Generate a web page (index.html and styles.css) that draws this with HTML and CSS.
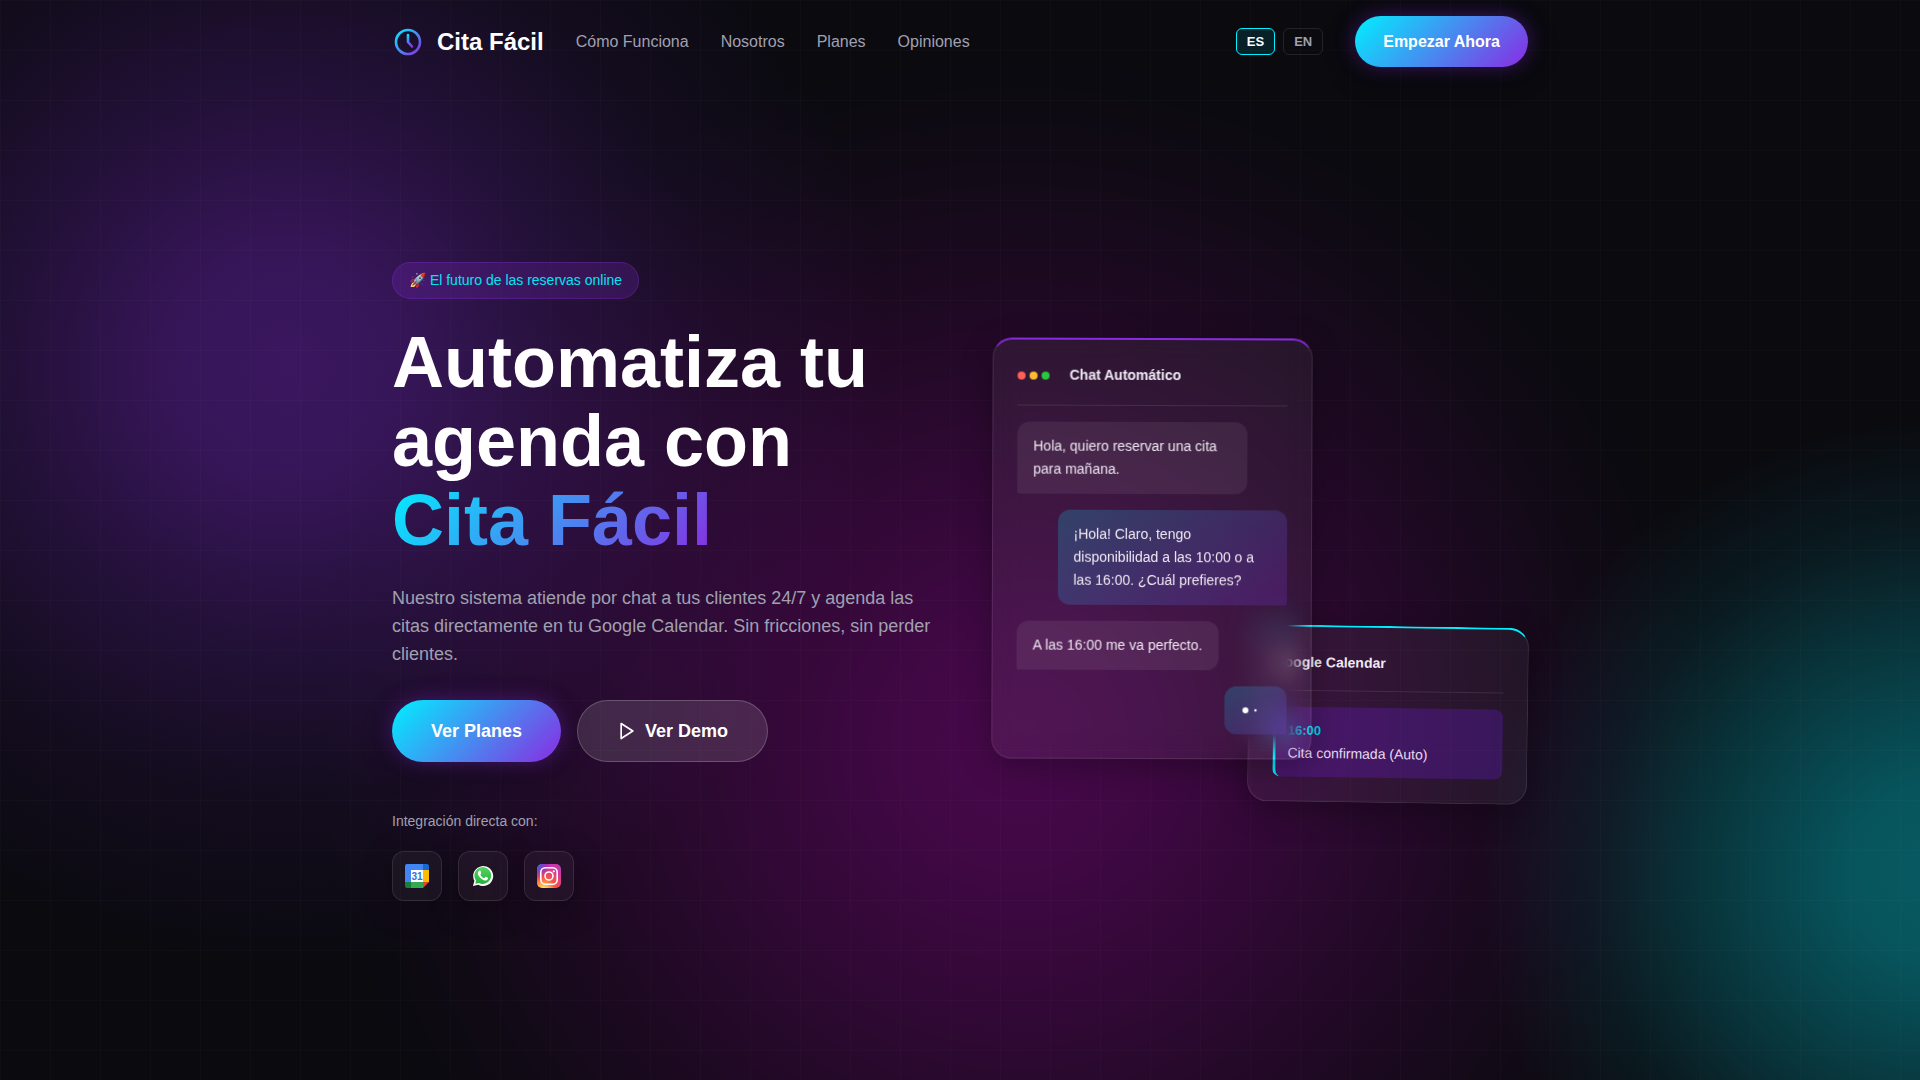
FILE: index.html
```html
<!DOCTYPE html>
<html lang="es">
<head>
<meta charset="utf-8">
<meta name="viewport" content="width=device-width, initial-scale=1">
<title>Cita Fácil</title>
<link rel="stylesheet" href="styles.css">
</head>
<body>
<header class="header">
  <div class="container header-inner">
    <a class="logo" href="#">
      <svg class="logo-icon" viewBox="0 0 32 32" fill="none" stroke-width="2.600" stroke-linecap="round" stroke-linejoin="round" aria-hidden="true">
        <defs>
          <linearGradient id="brand" x1="4" y1="4" x2="28" y2="28" gradientUnits="userSpaceOnUse">
            <stop offset="0" stop-color="#00f0ff"/>
            <stop offset="1" stop-color="#8a2be2"/>
          </linearGradient>
          <linearGradient id="hands" x1="14" y1="8" x2="20" y2="21" gradientUnits="userSpaceOnUse">
            <stop offset="0" stop-color="#00f0ff"/>
            <stop offset="1" stop-color="#8a2be2"/>
          </linearGradient>
        </defs>
        <circle cx="16" cy="16" r="12" stroke="url(#brand)"/>
        <path d="M16 9v7l4 4.500" stroke="url(#hands)"/>
      </svg>
      <span>Cita Fácil</span>
    </a>
    <nav class="nav">
      <a href="#como">Cómo Funciona</a>
      <a href="#nosotros">Nosotros</a>
      <a href="#planes">Planes</a>
      <a href="#opiniones">Opiniones</a>
    </nav>
    <div class="lang">
      <button class="lang-button lang-active" type="button">ES</button>
      <button class="lang-button" type="button">EN</button>
    </div>
    <a class="button button-primary" href="#planes">Empezar Ahora</a>
  </div>
</header>

<main class="hero">
  <div class="container hero-grid">
    <section class="hero-copy">
      <p class="badge">🚀 El futuro de las reservas online</p>
      <h1 class="title">Automatiza tu agenda con <span class="title-brand">Cita Fácil</span></h1>
      <p class="lead">Nuestro sistema atiende por chat a tus clientes 24/7 y agenda las citas directamente en tu Google Calendar. Sin fricciones, sin perder clientes.</p>
      <div class="actions">
        <a class="button button-large button-primary" href="#planes">Ver Planes</a>
        <a class="button button-large button-glass" href="#demo">
          <svg class="play" viewBox="0 0 24 24" fill="none" stroke="#fff" stroke-width="2" stroke-linecap="round" stroke-linejoin="round" aria-hidden="true"><path d="M5 3l14 9-14 9z"/></svg>
          Ver Demo
        </a>
      </div>
      <p class="integrations-label">Integración directa con:</p>
      <ul class="integrations">
        <li class="integration">
          <svg viewBox="0 0 24 24" role="img" aria-label="Google Calendar">
            <path fill="#4285f4" d="M2 0h16v6H6v12H0V2a2 2 0 0 1 2-2z"/>
            <path fill="#1967d2" d="M18 0h4a2 2 0 0 1 2 2v4h-6z"/>
            <path fill="#fbbc04" d="M18 6h6v12h-6z"/>
            <path fill="#34a853" d="M6 18h12v6H6z"/>
            <path fill="#188038" d="M0 18h6v6H2a2 2 0 0 1-2-2z"/>
            <path fill="#ea4335" d="M18 18h6l-6 6z"/>
            <path fill="#fff" d="M6 6h12v12H6z"/>
            <text x="12" y="16" text-anchor="middle" class="calendar-day">31</text>
          </svg>
        </li>
        <li class="integration">
          <svg viewBox="0 0 24 24" role="img" aria-label="WhatsApp">
            <defs><linearGradient id="wa" x1="0" y1="0" x2="0" y2="1"><stop offset="0" stop-color="#57d163"/><stop offset="1" stop-color="#23b33a"/></linearGradient></defs>
            <path fill="#fff" d="M2 22l1.400-5.200A10 10 0 1 1 7.200 20.700z"/>
            <path fill="url(#wa)" d="M4.300 19.700l.8-3.100A8.400 8.400 0 1 1 8 19z"/>
            <path fill="#fff" d="M9.600 7.100c-.2-.5-.4-.5-.7-.5-.5 0-.9.200-1.200.6-.5.500-.9 1.200-.9 2.100 0 1.300.9 2.500 1.100 2.700 1 1.600 2.500 3.100 4.400 3.900 1.600.6 2.500.6 3.200.3.700-.3 1.400-.8 1.500-1.400.1-.5.100-.9 0-1-.4-.3-1.600-.9-2-1-.3-.1-.5 0-.7.200l-.8 1c-.2.200-.4.200-.7.100-1.500-.7-2.600-1.600-3.400-3-.2-.3 0-.5.100-.7l.6-.7c.1-.3.100-.5 0-.7z"/>
          </svg>
        </li>
        <li class="integration">
          <svg viewBox="0 0 24 24" role="img" aria-label="Instagram">
            <defs>
              <radialGradient id="ig-warm" cx="0.27" cy="1.08" r="1"><stop offset="0" stop-color="#fd5"/><stop offset=".1" stop-color="#fd5"/><stop offset=".5" stop-color="#ff543e"/><stop offset="1" stop-color="#c837ab"/></radialGradient>
              <radialGradient id="ig-cool" cx="-0.1" cy="0" r=".65"><stop offset="0" stop-color="#3771c8"/><stop offset=".2" stop-color="#3771c8"/><stop offset="1" stop-color="#60f" stop-opacity="0"/></radialGradient>
            </defs>
            <rect width="24" height="24" rx="5" fill="url(#ig-warm)"/>
            <rect width="24" height="24" rx="5" fill="url(#ig-cool)"/>
            <g fill="none" stroke="#fff" stroke-width="1.600"><rect x="3.800" y="3.800" width="16.400" height="16.400" rx="4.500"/><circle cx="12" cy="12" r="4"/></g>
            <circle cx="16.800" cy="7.300" r="1.100" fill="#fff"/>
          </svg>
        </li>
      </ul>
    </section>

    <section class="visual">
      <article class="card chat">
        <header class="card-header">
          <span class="window-dots"><i class="dot dot-red"></i><i class="dot dot-yellow"></i><i class="dot dot-green"></i></span>
          <h2 class="card-title">Chat Automático</h2>
        </header>
        <div class="messages">
          <p class="message message-client">Hola, quiero reservar una cita para mañana.</p>
          <p class="message message-bot">¡Hola! Claro, tengo disponibilidad a las 10:00 o a las 16:00. ¿Cuál prefieres?</p>
          <p class="message message-client">A las 16:00 me va perfecto.</p>
          <div class="message message-bot typing"><i class="typing-dot"></i><i class="typing-dot typing-small"></i><i class="typing-dot typing-hidden"></i></div>
        </div>
      </article>
      <article class="card calendar">
        <header class="card-header"><h2 class="card-title">Google Calendar</h2></header>
        <div class="event">
          <time class="event-time">16:00</time>
          <p class="event-name">Cita confirmada (Auto)</p>
        </div>
      </article>
    </section>
  </div>
</main>
</body>
</html>
```
FILE: styles.css
```css
:root {
  --bg: #0a0a0f;
  --cyan: #00f0ff;
  --purple: #8a2be2;
  --muted: #a0a0b0;
  --line: rgba(255, 255, 255, 0.1);
  --brand: linear-gradient(135deg, var(--cyan), var(--purple));
  --shadow: 0 8px 32px rgba(0, 0, 0, 0.3);
}

* { box-sizing: border-box; margin: 0; padding: 0; }

body {
  min-height: 100vh;
  display: flex;
  flex-direction: column;
  color: #fff;
  font: 16px/26px "Liberation Sans", Arial, sans-serif;
  background:
    linear-gradient(rgba(255, 255, 255, 0.016) 1px, transparent 1px) 0 0 / 50px 50px,
    linear-gradient(90deg, rgba(255, 255, 255, 0.016) 1px, transparent 1px) 0 0 / 50px 50px,
    radial-gradient(circle 700px at 53% 69%, rgba(255, 0, 255, 0.25), rgba(255, 0, 255, 0.22) 18%, rgba(255, 0, 255, 0.15) 42%, rgba(255, 0, 255, 0.07) 68%, rgba(255, 0, 255, 0.025) 86%, transparent),
    radial-gradient(circle 460px at 101% 81%, rgba(0, 240, 255, 0.35), rgba(0, 240, 255, 0.32) 20%, rgba(0, 240, 255, 0.2) 48%, rgba(0, 240, 255, 0.07) 75%, transparent),
    radial-gradient(circle 600px at 15% 34%, rgba(138, 43, 226, 0.38), rgba(138, 43, 226, 0.34) 20%, rgba(138, 43, 226, 0.2) 45%, rgba(138, 43, 226, 0.07) 72%, transparent),
    var(--bg);
}

a { color: inherit; text-decoration: none; }
ul { list-style: none; }

.container { width: 100%; max-width: 1200px; margin: 0 auto; padding: 0 32px; }

.header { padding: 16px 0; }
.header-inner { display: flex; align-items: center; gap: 32px; }
.logo { display: flex; align-items: center; gap: 13px; font-size: 24px; font-weight: 700; }
.logo-icon { width: 32px; height: 32px; }
.nav { display: flex; gap: 32px; margin-right: auto; color: var(--muted); }
.lang { display: flex; gap: 8px; }
.lang-button {
  padding: 5px 10px;
  border: 1px solid var(--line);
  border-radius: 6px;
  background: transparent;
  color: var(--muted);
  font: 700 13px/15px "Liberation Sans", Arial, sans-serif;
}
.lang-active { border-color: var(--cyan); background: rgba(0, 240, 255, 0.1); color: #fff; }

.button {
  display: flex;
  align-items: center;
  justify-content: center;
  gap: 8px;
  padding: 12px 28px;
  border-radius: 50px;
  font-weight: 700;
  line-height: 27px;
}
.button-large { padding: 16px 39px; font-size: 18px; line-height: 30px; }
.button-primary { background: var(--brand); box-shadow: 0 0 20px rgba(138, 43, 226, 0.4), var(--shadow); }
.button-glass { border: 1px solid rgba(255, 255, 255, 0.2); background: rgba(255, 255, 255, 0.12); padding: 15px 39px; }
.play { width: 20px; height: 20px; }

.hero { flex: 1; display: flex; align-items: center; }
.hero-grid { display: grid; grid-template-columns: minmax(0, 1fr) 536px; gap: 60px; align-items: center; }
.badge {
  width: fit-content;
  margin-bottom: 24px;
  padding: 6px 16px;
  border: 1px solid rgba(138, 43, 226, 0.3);
  border-radius: 20px;
  background: rgba(138, 43, 226, 0.2);
  color: #00e4f2;
  font-size: 14px;
  line-height: 23px;
}
.title { margin-bottom: 24px; font-size: 72px; line-height: 79px; font-weight: 700; }
.title-brand { background: var(--brand); background-clip: text; color: transparent; display: table; }
.lead { margin-bottom: 32px; color: var(--muted); font-size: 18px; line-height: 28px; }
.actions { display: flex; gap: 16px; margin-bottom: 48px; }
.integrations-label { margin-bottom: 18px; color: var(--muted); font-size: 14px; line-height: 23px; }
.integrations { display: flex; gap: 16px; }
.integration {
  display: grid;
  place-items: center;
  width: 50px;
  height: 50px;
  border: 1px solid var(--line);
  border-radius: 12px;
  background: rgba(255, 255, 255, 0.04);
  box-shadow: var(--shadow);
}
.integration svg { width: 24px; height: 24px; }
.calendar-day { font: 700 10px "Liberation Sans", Arial, sans-serif; fill: #3074e0; }

.visual { display: flex; flex-direction: column; padding-bottom: 22px; }
.card {
  position: relative;
  padding: 24px;
  border: 1px solid var(--line);
  border-top: 2px solid var(--cyan);
  border-radius: 20px;
  background: rgba(255, 255, 255, 0.05);
  box-shadow: var(--shadow);
}
.chat {
  z-index: 1;
  align-self: flex-start;
  width: 320px;
  border-color: transparent;
  background: none;
  transform: rotate(0.2deg);
}
/* The glass blur fades out toward the right and bottom edges; the tinted
   pane and its border are drawn over it so they stay crisp. */
.chat::before,
.chat::after {
  content: "";
  position: absolute;
  z-index: -1;
  inset: -2px -1px -1px;
  border-radius: 20px;
}
.chat::before {
  backdrop-filter: blur(14px);
  mask: linear-gradient(to left, transparent, #000 24px), linear-gradient(to top, transparent, #000 24px);
  mask-composite: intersect;
}
.chat::after {
  border: 1px solid var(--line);
  border-top: 2px solid var(--purple);
  background: rgba(255, 255, 255, 0.05);
}
.calendar { align-self: flex-end; width: 280px; margin-top: -133px; transform: rotate(0.8deg); }
.card-header { display: flex; align-items: center; gap: 20px; margin-bottom: 16px; padding-bottom: 16px; border-bottom: 1px solid var(--line); }
.chat .card-header { padding-bottom: 18px; }
.card-title { font-size: 14px; line-height: 23px; font-weight: 700; color: #f0eaf4; }
.window-dots { display: flex; gap: 4px; }
.dot { width: 8px; height: 8px; border-radius: 50%; }
.dot-red { background: #ff5f56; }
.dot-yellow { background: #ffbd2e; }
.dot-green { background: #27c93f; }

.messages { display: flex; flex-direction: column; gap: 16px; }
.message {
  max-width: 85%;
  padding: 12px 15px;
  border: 1px solid transparent;
  border-radius: 12px;
  color: #efe6f2;
  font-size: 14px;
  line-height: 23px;
}
.message-client { align-self: flex-start; border-bottom-left-radius: 2px; background: rgba(255, 255, 255, 0.07); }
.message-bot {
  align-self: flex-end;
  border-bottom-right-radius: 2px;
  background: linear-gradient(135deg, rgba(0, 240, 255, 0.2), rgba(138, 43, 226, 0.22)) border-box;
}
.typing { display: flex; align-items: center; gap: 4px; width: 62px; height: 48px; padding: 0 17px; }
.typing-dot { width: 6px; height: 6px; border-radius: 50%; background: #fff; }
.typing-small { transform: scale(0.4); }
.typing-hidden { transform: scale(0); }

.event {
  padding: 12px;
  border-left: 3px solid var(--cyan);
  border-radius: 8px;
  background: rgba(110, 30, 220, 0.28);
}
.event-time { display: block; color: #00d5e8; font-size: 13px; line-height: 23px; font-weight: 700; }
.event-name { color: #e6daf0; font-size: 14px; line-height: 23px; }

@media (max-width: 1100px) {
  .hero-grid { grid-template-columns: minmax(0, 1fr); }
  .header-inner { flex-wrap: wrap; }
}
```
